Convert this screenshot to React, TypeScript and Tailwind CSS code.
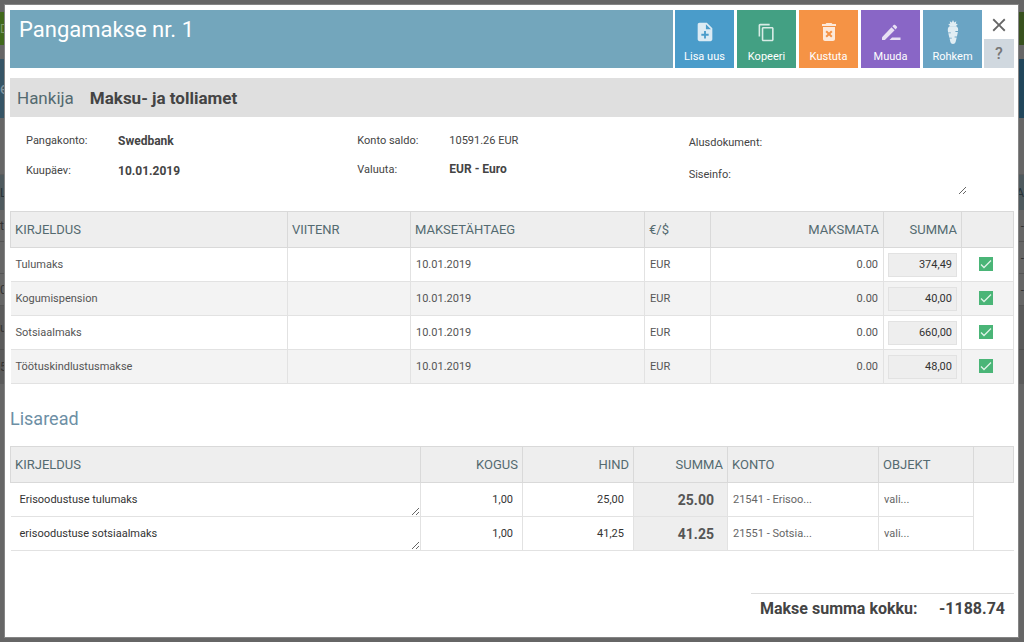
import type { ReactNode } from 'react';
import { MdClose, MdContentCopy, MdDeleteForever, MdNoteAdd } from 'react-icons/md';

const payments = [
  { name: 'Tulumaks', due: '10.01.2019', currency: 'EUR', unpaid: '0.00', sum: '374,49' },
  { name: 'Kogumispension', due: '10.01.2019', currency: 'EUR', unpaid: '0.00', sum: '40,00' },
  { name: 'Sotsiaalmaks', due: '10.01.2019', currency: 'EUR', unpaid: '0.00', sum: '660,00' },
  { name: 'Töötuskindlustusmakse', due: '10.01.2019', currency: 'EUR', unpaid: '0.00', sum: '48,00' },
];

const extraRows = [
  { name: 'Erisoodustuse tulumaks', qty: '1,00', price: '25,00', sum: '25.00', account: '21541 - Erisoo...' },
  { name: 'erisoodustuse sotsiaalmaks', qty: '1,00', price: '41,25', sum: '41.25', account: '21551 - Sotsia...' },
];

function CarrotIcon() {
  return (
    <svg width="12" height="24" viewBox="0 0 12 24" fill="currentColor" aria-hidden="true">
      <path d="M6 0 7.200 2.500 9.300 1.200 8.800 3.800 10.800 4 8.800 6.200H3.200L1.200 4 3.200 3.800 2.700 1.200 4.800 2.500Z" />
      <path d="M2.600 6.200h6.800c1.700 1 2 2.800 1.600 4.800H8.400v.9h2.500l-1 4.600H7.600v.9h2.100l-1.100 4.600C8.200 23.300 7.300 24 6 24s-2.200-.7-2.600-2L2.600 18.600h2.200v-.9H2.400L1.300 13.300h2.600v-.9H1.100C.5 9.300.7 7.200 2.600 6.200Z" />
    </svg>
  );
}

function PencilIcon() {
  return (
    <svg width="22" height="20" viewBox="0 0 22 20" fill="currentColor" aria-hidden="true">
      <path d="M2 15.200V18h2.900L14.600 8.300 11.500 5.200Z" />
      <path d="m12.400 4.300 3.100 3.100 1.300-1.300c.5-.5.5-1 0-1.500l-1.600-1.600c-.5-.5-1-.5-1.500 0Z" />
      <path d="M12 15.500h8.500V18h-11Z" />
    </svg>
  );
}

function ActionButton({ label, color, children }: { label: string; color: string; children: ReactNode }) {
  return (
    <button type="button" className={`flex w-[59px] flex-col items-center justify-end pb-[3px] text-[11px] text-white ${color}`}>
      <span className="mb-[5px] flex h-6 items-center text-white/80">{children}</span>
      <span className="leading-4">{label}</span>
    </button>
  );
}

function Th({ right, children }: { right?: boolean; children?: ReactNode }) {
  return (
    <th className={`h-9 border border-[#d9d9d9] bg-[#eee] px-1 text-[13px] font-normal text-[#546a70] ${right ? 'text-right' : 'text-left'}`}>
      {children}
    </th>
  );
}

// the dimmed page that shows round the edges of the dialog
function Backdrop() {
  return (
    <div className="absolute inset-0 flex flex-col overflow-hidden text-xs text-[#333]" aria-hidden="true">
      <div className="h-3 shrink-0" />
      <div className="flex h-[33px] shrink-0 items-center bg-gradient-to-r from-[#41691b] to-[#38511e] text-[#7f9a68]">D</div>
      <div className="h-[14px] shrink-0" />
      <div className="flex h-[59px] shrink-0 items-center bg-gradient-to-r from-[#365566] to-[#21465b] text-base text-[#8296a0]">e</div>
      <div className="h-[57px] shrink-0 border-b border-[#5c5c5c]" />
      <div className="flex h-[35px] shrink-0 items-center justify-between bg-[#4f5a5e] text-[#263238]">
        <span>L</span>
        <span>A</span>
      </div>
      {['t', '', '0'].map((text, i) => (
        <div key={i} className="flex h-8 shrink-0 items-center justify-between border-b border-[#555]">
          <span>{text}</span>
          <span>-</span>
        </div>
      ))}
      <div className="flex h-[44px] shrink-0 items-center border-b border-[#505050] bg-[#5b5b5b]">u</div>
      <div className="flex h-[34px] shrink-0 items-center bg-[#5b5b5b]">5</div>
    </div>
  );
}

export default function App() {
  return (
    <div className="relative flex min-h-screen bg-[#666] py-[5px] pr-[6px] pl-[5px] font-[Roboto,'Liberation_Sans',sans-serif] text-[11px] text-[#444]">
      <Backdrop />
      <main role="dialog" aria-labelledby="title" className="relative flex-1 bg-white pt-[5px] pr-1 pb-2 pl-[5px] outline outline-[#858585]">
        <header className="flex h-[58px] gap-[2px]">
          <h1 id="title" className="flex-1 bg-[#73a6bc] px-[9px] pt-1 text-[22px] leading-8 text-white">
            Pangamakse nr. 1
          </h1>
          <div className="flex gap-[3px]">
            <ActionButton label="Lisa uus" color="bg-[#4a9cca]">
              <MdNoteAdd size={22} />
            </ActionButton>
            <ActionButton label="Kopeeri" color="bg-[#43a083]">
              <MdContentCopy size={19} />
            </ActionButton>
            <ActionButton label="Kustuta" color="bg-[#f59345]">
              <MdDeleteForever size={24} />
            </ActionButton>
            <ActionButton label="Muuda" color="bg-[#8966c6]">
              <PencilIcon />
            </ActionButton>
            <ActionButton label="Rohkem" color="bg-[#6aa4c4]">
              <CarrotIcon />
            </ActionButton>
          </div>
          <div className="flex w-[30px] flex-col">
            <button type="button" aria-label="Sulge" className="flex h-[29px] items-center justify-center text-[#666]">
              <MdClose size={22} />
            </button>
            <button type="button" className="flex-1 bg-[#d0d8df] text-base font-medium text-[#777]">?</button>
          </div>
        </header>

        <h2 className="mt-[10px] flex h-[39px] items-center gap-4 bg-[#dfdfdf] px-[7px] pt-0.5 text-[17px]">
          <span className="text-[#546a70]">Hankija</span>
          <strong className="font-bold">Maksu- ja tolliamet</strong>
        </h2>

        <section className="flex h-[94px] pt-[9px]">
          <dl className="grid w-[33%] grid-cols-[92px_1fr] content-start pl-4 leading-[30px]">
            <dt>Pangakonto:</dt>
            <dd className="text-xs leading-[30px] font-bold">Swedbank</dd>
            <dt>Kuupäev:</dt>
            <dd className="text-xs leading-[30px] font-bold">10.01.2019</dd>
          </dl>
          <dl className="grid w-[33%] grid-cols-[92px_1fr] content-start pl-4 leading-[29px]">
            <dt>Konto saldo:</dt>
            <dd>10591.26 EUR</dd>
            <dt>Valuuta:</dt>
            <dd className="text-xs leading-[29px] font-bold">EUR - Euro</dd>
          </dl>
          <div className="grid flex-1 grid-cols-[92px_186px] content-start pt-px pl-4 leading-8">
            <label htmlFor="document">Alusdokument:</label>
            <input id="document" className="w-full outline-none" />
            <label htmlFor="info">Siseinfo:</label>
            <textarea id="info" className="h-9 w-full resize outline-none" />
          </div>
        </section>

        <table className="w-full table-fixed border-collapse">
          <colgroup>
            <col />
            <col className="w-[123px]" />
            <col className="w-[234px]" />
            <col className="w-[66px]" />
            <col className="w-[173px]" />
            <col className="w-[78px]" />
            <col className="w-[52px]" />
          </colgroup>
          <thead>
            <tr>
              <Th>KIRJELDUS</Th>
              <Th>VIITENR</Th>
              <Th>MAKSETÄHTAEG</Th>
              <Th>€/$</Th>
              <Th right>MAKSMATA</Th>
              <Th right>SUMMA</Th>
              <Th />
            </tr>
          </thead>
          <tbody>
            {payments.map((row) => (
              <tr key={row.name} className="h-[34px] border-b border-[#e2e2e2] text-[#555] even:bg-[#f3f3f3]">
                <td className="pt-0.5 pl-[5px]">{row.name}</td>
                <td className="border-x border-[#e2e2e2]" />
                <td className="px-[5px] pt-0.5">{row.due}</td>
                <td className="border-x border-[#e2e2e2] px-[5px] pt-0.5">{row.currency}</td>
                <td className="px-[5px] pt-0.5 text-right">{row.unpaid}</td>
                <td className="border-x border-[#e2e2e2] px-1">
                  <input
                    aria-label={`${row.name} summa`}
                    defaultValue={row.sum}
                    className="block h-6 w-full border border-[#e2e2e2] bg-[#eee] px-1 text-right text-[#333]"
                  />
                </td>
                <td className="border-r border-[#e2e2e2] pr-[3px] pb-px">
                  <label className="mx-auto grid size-[14px]">
                    <input
                      type="checkbox"
                      defaultChecked
                      aria-label={row.name}
                      className="col-start-1 row-start-1 size-[14px] appearance-none bg-[#4ab577]"
                    />
                    <svg viewBox="0 0 14 14" className="pointer-events-none col-start-1 row-start-1 size-[14px]" fill="none" stroke="#dff3e7" strokeWidth="1.3">
                      <path d="m2 7.500 3 3 7-7" />
                    </svg>
                  </label>
                </td>
              </tr>
            ))}
          </tbody>
        </table>

        <h2 className="mt-5 mb-[13px] text-lg leading-[29px] text-[#6d8fa5]">Lisaread</h2>

        <table className="w-full table-fixed border-collapse">
          <colgroup>
            <col />
            <col className="w-[102px]" />
            <col className="w-[111px]" />
            <col className="w-[94px]" />
            <col className="w-[151px]" />
            <col className="w-[95px]" />
            <col className="w-[40px]" />
          </colgroup>
          <thead>
            <tr>
              <Th>KIRJELDUS</Th>
              <Th right>KOGUS</Th>
              <Th right>HIND</Th>
              <Th right>SUMMA</Th>
              <Th>KONTO</Th>
              <Th>OBJEKT</Th>
              <Th />
            </tr>
          </thead>
          <tbody className="border-b border-[#e2e2e2]">
            {extraRows.map((row) => (
              <tr key={row.name} className="h-[34px]">
                <td className="border-b border-[#e2e2e2]">
                  <textarea
                    aria-label="Kirjeldus"
                    defaultValue={row.name}
                    className="block h-[33px] w-full resize overflow-hidden px-[9px] pt-[9px] leading-4 text-[#333]"
                  />
                </td>
                <td className="border border-[#e2e2e2] pt-px">
                  <input aria-label="Kogus" defaultValue={row.qty} className="w-full px-[9px] text-right text-[#333]" />
                </td>
                <td className="border border-[#e2e2e2] pt-px">
                  <input aria-label="Hind" defaultValue={row.price} className="w-full px-[9px] text-right text-[#333]" />
                </td>
                <td className="border border-[#e2e2e2] bg-[#eee] pr-[13px] text-right text-sm leading-5 font-bold text-[#555]">{row.sum}</td>
                <td className="border border-[#e2e2e2] pt-px">
                  <select aria-label="Konto" className="w-full appearance-none px-[5px] text-[#666]">
                    <option>{row.account}</option>
                  </select>
                </td>
                <td className="border border-[#e2e2e2] pt-px">
                  <select aria-label="Objekt" className="w-full appearance-none px-[5px] text-[#666]">
                    <option>vali...</option>
                  </select>
                </td>
                <td />
              </tr>
            ))}
          </tbody>
        </table>

        <div className="mt-[42px] ml-auto flex w-[263px] justify-between border-t border-[#ddd] px-[9px] pt-[3px] text-base font-bold">
          <span>Makse summa kokku:</span>
          <span>-1188.74</span>
        </div>
      </main>
    </div>
  );
}
